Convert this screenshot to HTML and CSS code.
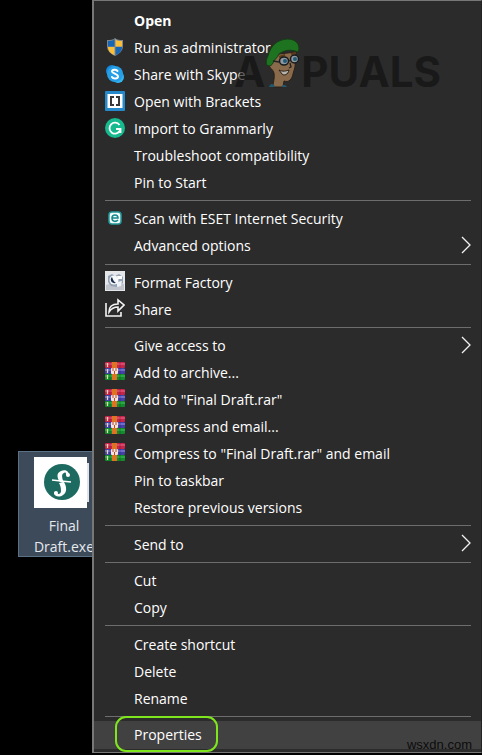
FILE: index.html
```html
<!DOCTYPE html>
<html lang="en">
<head>
<meta charset="utf-8">
<title>Final Draft.exe</title>
<link rel="stylesheet" href="styles.css">
</head>
<body>
<svg class="defs" aria-hidden="true">
  <symbol id="rar" viewBox="0 0 20 20">
    <rect x="0" y="0" width="20" height="6" rx="1" fill="#c8234b"/>
    <rect x="0" y="1" width="20" height="2" fill="#e0466b"/>
    <rect x="0" y="6" width="20" height="6" rx="1" fill="#4340a8"/>
    <rect x="0" y="7" width="20" height="2" fill="#716cd0"/>
    <rect x="0" y="12" width="20" height="6" rx="1" fill="#138a2c"/>
    <rect x="0" y="13" width="20" height="2" fill="#27aa42"/>
    <path d="M2.500 1v4M2.500 7v4M2.500 13v4" stroke="#e9d8a8" stroke-width="1.200"/>
    <path d="M5 0v18M15 0v18" stroke="#222" stroke-opacity=".35"/>
    <rect x="7" y="0" width="5" height="18" fill="#dc7422"/>
    <rect x="6" y="6" width="7" height="6" rx="1" fill="#f4e6dc"/>
    <path d="M8 6v3M11 6v3M9.500 9v3" stroke="#b8472b" stroke-width="1"/>
  </symbol>
  <symbol id="chevron" viewBox="0 0 10 18">
    <path d="M1 1l8 8-8 8" fill="none" stroke="#f2f2f2" stroke-width="1.300"/>
  </symbol>
</svg>

<div class="file">
  <span class="thumb">
    <svg viewBox="0 0 53 51" aria-hidden="true">
      <circle cx="28" cy="25" r="18" fill="#1d6b60"/>
      <path d="M35 18c0-4-4-6-8-4-5 2-4 7-1 11l4 1c-2-5-3-9 0-10 2-1 2 0 2 2z" fill="#fff"/>
      <path d="M25 26l5-1c3 5 3 11-1 13-4 3-9 1-9-2 1-2 3-1 3 0 1 2 4 1 4-2 0-4-1-6-2-8z" fill="#fff"/>
      <path d="M18 23l9 1 10 1" fill="none" stroke="#fff" stroke-width="1.500"/>
      <circle cx="34" cy="18" r="2" fill="#fff"/><circle cx="22" cy="36" r="2" fill="#fff"/>
    </svg>
  </span>
  <span>Final Draft.exe</span>
</div>

<ul class="menu">
  <li><button class="default"><span>Open</span></button></li>
  <li><button>
    <svg class="icon" viewBox="0 0 20 20" aria-hidden="true">
      <path d="M10 1c-2 2-5 2-8 2v6c0 5 4 8 8 10 4-2 8-5 8-10V3c-3 0-6 0-8-2z" fill="#7d8790"/>
      <path d="M9.500 2C8 4 5 4 3 4v5.500h6.500z" fill="#1666b5"/><path d="M10.500 2c1 2 4 2 6.500 2v5.500h-6.500z" fill="#f9bf3b"/>
      <path d="M3 10c0 4 3 7 6.500 8v-8z" fill="#f9bf3b"/><path d="M17 10c0 4-3 7-6.500 8v-8z" fill="#1666b5"/>
    </svg><span>Run as administrator</span></button></li>
  <li><button>
    <svg class="icon" viewBox="0 0 20 20" aria-hidden="true">
      <circle cx="7" cy="7" r="6" fill="#1687d9"/><circle cx="13" cy="13" r="6" fill="#35b5f0"/><circle cx="10" cy="10" r="8" fill="#259fe6"/>
      <path d="M12.500 7c-1-2-5.500-1.500-5.500.5S13 10 13 12.500 8 15 7 13" fill="none" stroke="#fff" stroke-width="2" stroke-linecap="round"/>
    </svg><span>Share with Skype</span></button></li>
  <li><button>
    <svg class="icon" viewBox="0 0 20 20" aria-hidden="true">
      <rect width="20" height="20" rx="1" fill="#2689c9"/><rect x="2.500" y="3" width="15" height="14" fill="#fff"/>
      <path d="M9 6H6v8h3M11 6h3v8h-3" fill="none" stroke="#383838" stroke-width="2"/>
    </svg><span>Open with Brackets</span></button></li>
  <li><button>
    <svg class="icon" viewBox="0 0 20 20" aria-hidden="true">
      <circle cx="10" cy="10" r="10" fill="#17b98e"/>
      <path d="M14.500 7A5.500 5.500 0 1 0 15 12.500M11 11h4.500v4" fill="none" stroke="#fff" stroke-width="1.800"/>
    </svg><span>Import to Grammarly</span></button></li>
  <li><button><span>Troubleshoot compatibility</span></button></li>
  <li><button><span>Pin to Start</span></button></li>
  <li class="separator"></li>
  <li><button>
    <svg class="icon" viewBox="0 0 20 20" aria-hidden="true">
      <rect x="4" y="4" width="12" height="12" rx="3" fill="#f5fbfb" stroke="#249a9c" stroke-width="1.500"/>
      <path d="M7 10h6c0-4-6-4-6 0s4 4 6 2" fill="none" stroke="#16898d" stroke-width="1.600"/>
    </svg><span>Scan with ESET Internet Security</span></button></li>
  <li><button><span>Advanced options</span><svg class="more" aria-hidden="true"><use href="#chevron"/></svg></button></li>
  <li class="separator"></li>
  <li><button>
    <svg class="icon" viewBox="0 0 20 20" aria-hidden="true">
      <rect width="20" height="20" fill="#e4e6ea"/><path d="M1 14l6-2 12 1v6H1z" fill="#bfc4cc"/>
      <path d="M3 5l4-2 3 2 4-2 4 3v6l-3 2-3 2-6-1-3-4z" fill="#93a2b4"/>
      <circle cx="9" cy="9" r="4.500" fill="#f7f9fb"/><path d="M7 6c-3 3 0 7 4 6-2-1-3-3-4-6z" fill="#1c2e4b"/>
      <path d="M12 5h5v3h-4z" fill="#fff"/><path d="M12 11l5-1-1 5-4 1z" fill="#eef1f5"/>
    </svg><span>Format Factory</span></button></li>
  <li><button>
    <svg class="icon" viewBox="0 0 20 20" aria-hidden="true">
      <path d="M1 5v13h15v-4M4 14c0-5 3-8 9-8V2l6 5-6 6V9c-4 0-7 2-9 5z" fill="none" stroke="#f4f4f4" stroke-width="1.600"/>
    </svg><span>Share</span></button></li>
  <li class="separator"></li>
  <li><button><span>Give access to</span><svg class="more" aria-hidden="true"><use href="#chevron"/></svg></button></li>
  <li><button><svg class="icon" aria-hidden="true"><use href="#rar"/></svg><span>Add to archive...</span></button></li>
  <li><button><svg class="icon" aria-hidden="true"><use href="#rar"/></svg><span>Add to "Final Draft.rar"</span></button></li>
  <li><button><svg class="icon" aria-hidden="true"><use href="#rar"/></svg><span>Compress and email...</span></button></li>
  <li><button><svg class="icon" aria-hidden="true"><use href="#rar"/></svg><span>Compress to "Final Draft.rar" and email</span></button></li>
  <li><button><span>Pin to taskbar</span></button></li>
  <li><button><span>Restore previous versions</span></button></li>
  <li class="separator"></li>
  <li><button><span>Send to</span><svg class="more" aria-hidden="true"><use href="#chevron"/></svg></button></li>
  <li class="separator"></li>
  <li><button><span>Cut</span></button></li>
  <li><button><span>Copy</span></button></li>
  <li class="separator"></li>
  <li><button><span>Create shortcut</span></button></li>
  <li><button><span>Delete</span></button></li>
  <li><button><span>Rename</span></button></li>
  <li class="separator"></li>
  <li><button class="selected"><span>Properties</span></button></li>
</ul>

<div class="brand">
  <span>A</span>
  <svg viewBox="0 0 36 50" aria-hidden="true">
    <path d="M4 27c0 3 4 4 5 8 1 5-1 9-1 14h10l1-6c5 2 8-2 9-7l2-7 1-15L14 16z" fill="#94714f" stroke="#2b2018"/>
    <path d="M4 49c1-3 3-4 5-2l1 2zM17 49c0-3 3-3 5 0z" fill="#205d76"/>
    <path d="M4 28C0 27 1 22 3 18 6 7 12 2 22 1c8 0 12 4 12 10l-1 3c-7-3-14-2-19 2-2 4-3 4-5 7-1 2-2 5-5 5z" fill="#1d7b20" stroke="#143f16"/>
    <path d="M14 19l6-2M26 16l5-1" stroke="#633c19" stroke-width="2"/>
    <ellipse cx="19" cy="23" rx="4.500" ry="4" fill="#9aa4ad" stroke="#15191d" stroke-width="1.500"/>
    <ellipse cx="29.500" cy="21" rx="4" ry="4" fill="#9aa4ad" stroke="#15191d" stroke-width="1.500"/>
    <circle cx="20" cy="23" r="2" fill="#22607e"/><circle cx="30" cy="21" r="2" fill="#22607e"/>
    <path d="M14 24l-6-1M24 23l2-1M25 25l1 4-2 1" fill="none" stroke="#222" stroke-width="1.300"/>
    <path d="M14 32c4 2 7 1 10 0-1 5-5 6-7 4z" fill="#c7c3bb" stroke="#2b1d16"/>
  </svg>
  <span>PUALS</span>
</div>
<div class="source">wsxdn.com</div>
</body>
</html>
```
FILE: styles.css
```css
*,
*::before,
*::after {
  box-sizing: border-box;
}

body {
  position: relative;
  display: flex;
  min-height: 100vh;
  margin: 0;
  padding: 0 0 2px 92px;
  background: #000;
  color: #fff;
  font: 14px/21px "Open Sans", "Noto Sans", sans-serif;
}

.defs {
  position: absolute;
  width: 0;
  height: 0;
}

/* Selected file on the desktop, partly under the menu */
.file {
  position: absolute;
  top: 451px;
  left: 18px;
  width: 92px;
  height: 106px;
  padding-top: 5px;
  border: 1px solid #5b7186;
  background: #3d4a5a;
  text-align: center;
}

.file > span {
  display: block;
  color: #e6e9ec;
}

.file .thumb {
  width: 53px;
  height: 51px;
  margin: 0 0 7px 15px;
  background: #fff;
  box-shadow: 8px 0 0 -6px #dfe5ea;
}

.menu {
  position: relative;
  flex: 1;
  display: flex;
  flex-direction: column;
  margin: 0;
  padding: 6px 0 3px;
  border: solid #777;
  border-width: 1px 1px 1px 2px;
  border-right-color: #222;
  background: #2b2b2b;
  list-style: none;
}

.menu button {
  display: grid;
  grid-template-columns: 20px 1fr 10px;
  align-items: center;
  column-gap: 9px;
  width: 100%;
  height: 27px;
  padding: 0 10px 0 11px;
  border: 0;
  background: none;
  color: #fff;
  font: inherit;
  text-align: left;
}

.menu button span {
  grid-column: 2;
  grid-row: 1;
  white-space: nowrap;
}

.menu .default {
  font-weight: 700;
}

.icon {
  width: 20px;
  height: 20px;
  margin-bottom: 2px;
}

.more {
  grid-column: 3;
  width: 10px;
  height: 18px;
  margin-bottom: 2px;
}

.separator {
  display: flex;
  flex: 1;
  align-items: center;
  margin: 0 10px 0 11px;
}

.separator::before {
  content: "";
  flex: 1;
  border-top: 1px solid #6d6d6d;
}

.menu .selected {
  position: relative;
  height: 28px;
  background: #414141;
}

.selected::after {
  content: "";
  position: absolute;
  top: -5px;
  left: 21px;
  width: 103px;
  height: 36px;
  border: 2px solid #7fe61d;
  border-radius: 11px;
}

/* Watermarks lie over the menu */
.brand {
  position: absolute;
  top: 38px;
  left: 234px;
  display: flex;
  align-items: flex-end;
  font: 700 42px/32px Inter, sans-serif;
  pointer-events: none;
}

.brand span {
  color: #101010;
  opacity: 0.65;
}

.brand svg {
  width: 36px;
  height: 50px;
  opacity: 0.9;
}

.source {
  position: absolute;
  right: 10px;
  bottom: 2px;
  color: #0c0c0c;
  font: 13px/16px "Liberation Sans", sans-serif;
}
```
